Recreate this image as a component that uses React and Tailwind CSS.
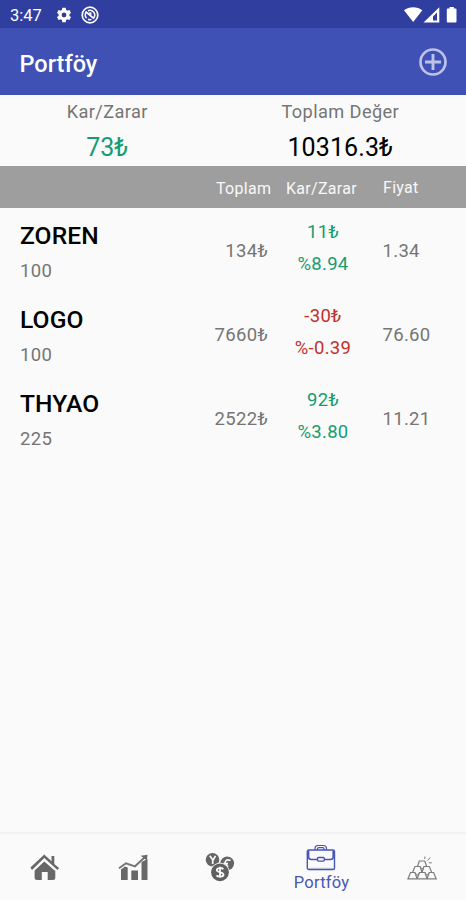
const HOLDINGS = [
  { code: 'ZOREN', lots: '100', total: '134₺', gain: '11₺', percent: '%8.94', price: '1.34', up: true },
  { code: 'LOGO', lots: '100', total: '7660₺', gain: '-30₺', percent: '%-0.39', price: '76.60', up: false },
  { code: 'THYAO', lots: '225', total: '2522₺', gain: '92₺', percent: '%3.80', price: '11.21', up: true },
];

function StatusBar() {
  return (
    <div className="flex h-[28px] items-center bg-[#303f9f] pl-[10px] pr-[8px] text-white">
      <span className="w-[45px] text-[16.5px] leading-[28px] pt-[3px]">3:47</span>
      <svg className="mt-[2px] size-[18px]" viewBox="0 0 24 24" fill="currentColor">
        <path d="M19.14 12.94c.04-.3.06-.61.06-.94s-.02-.64-.07-.94l2.03-1.58a.5.5 0 0 0 .12-.61l-1.92-3.32a.5.5 0 0 0-.59-.22l-2.39.96a7 7 0 0 0-1.62-.94l-.36-2.54a.5.5 0 0 0-.48-.41h-3.84a.5.5 0 0 0-.47.41l-.36 2.54c-.59.24-1.13.57-1.62.94l-2.39-.96a.5.5 0 0 0-.59.22L2.74 8.87a.5.5 0 0 0 .12.61l2.03 1.58a7 7 0 0 0 0 1.88l-2.03 1.58a.5.5 0 0 0-.12.61l1.92 3.32c.12.22.37.29.59.22l2.39-.96c.5.38 1.03.7 1.62.94l.36 2.54c.05.24.24.41.48.41h3.84c.24 0 .44-.17.47-.41l.36-2.54c.59-.24 1.13-.56 1.62-.94l2.39.96c.22.08.47 0 .59-.22l1.92-3.32a.5.5 0 0 0-.12-.61zM12 15.2a3.2 3.2 0 1 1 0-6.4 3.2 3.2 0 0 1 0 6.4z" />
      </svg>
      <svg className="ml-[8px] mt-[2px] size-[18px]" viewBox="0 0 18 18" fill="none" stroke="currentColor">
        <circle cx="9" cy="9" r="7.8" strokeWidth="1.7" />
        <path d="M5.600 12.200A4.700 4.700 0 0 1 5.200 6.300M7 4.800A4.700 4.700 0 0 1 12.800 11.800M7 13.200A4.700 4.700 0 0 0 10.500 13.400" strokeWidth="1.500" />
        <path d="M4.500 5.500l8.500 7.200" strokeWidth="1.700" />
        <path d="M7.800 6.700h2.400v2.200z" fill="currentColor" strokeWidth=".5" />
      </svg>
      <svg className="ml-auto mt-[1px] h-[18px] w-[54px]" viewBox="0 0 54 18" fill="currentColor">
        <path d="M0 4.300C5 .3 13.300.3 18.300 4.300L9.200 16z" />
        <path fillRule="evenodd" d="M35.300 1.200V16.400H19.500zM33 6.500L29 10.500V14.600H33z" />
        <path d="M45.500 1h4.400v1.500h1.700q.9 0 .9.900v12.100q0 .9-.9.900h-7.900q-.9 0-.9-.9V3.400q0-.9.900-.9h1.800z" />
      </svg>
    </div>
  );
}

function AppBar() {
  return (
    <header className="flex h-[67px] items-center justify-between bg-[#3f51b5] pl-[19.5px] pr-[18px]">
      <h1 className="text-[23.5px] font-medium leading-[30px] text-white pt-[5px]">Portföy</h1>
      <svg className="mt-[1px] size-[30px] text-[#bcc2e8]" viewBox="0 0 30 30" fill="none" stroke="currentColor">
        <circle cx="15" cy="15" r="12.500" strokeWidth="2.700" />
        <path d="M15 7v16M7 15h16" strokeWidth="2.900" />
      </svg>
    </header>
  );
}

function Summary() {
  return (
    <section className="flex h-[71px] text-center">
      <div className="w-[215px]">
        <div className="pt-[4px] text-[18.200px] leading-[25px] tracking-[0.4px] text-[#757575]">Kar/Zarar</div>
        <div className="mt-[9px] text-[25px] leading-[30px] text-[#169c70]">73₺</div>
      </div>
      <div className="w-[252px]">
        <div className="pt-[4px] text-[18.200px] leading-[25px] tracking-[0.4px] text-[#757575]">Toplam Değer</div>
        <div className="mt-[9px] text-[25px] leading-[30px] tracking-[0.1px] text-black">10316.3₺</div>
      </div>
    </section>
  );
}

function Row({ item }) {
  const tone = item.up ? 'text-[#169c70]' : 'text-[#c4302b]';
  return (
    <li className="flex h-[84px] pl-[20px] text-[18.5px] tracking-[0.3px] text-[#757575]">
      <div className="w-[160px]">
        <div className="pt-[12px] text-[24.600px] font-medium leading-[32px] tracking-[0.1px] text-black">{item.code}</div>
        <div className="mt-[6px] leading-[26px]">{item.lots}</div>
      </div>
      <div className="w-[88px] pt-[30px] text-right leading-[26px]">{item.total}</div>
      <div className={'w-[110px] pt-[8px] text-center leading-[32px] ' + tone}>
        <div>{item.gain}</div>
        <div>{item.percent}</div>
      </div>
      <div className="pl-[4.500px] pt-[30px] leading-[26px]">{item.price}</div>
    </li>
  );
}

function HomeIcon() {
  return (
    <svg className="h-[28px] w-[30px]" viewBox="0 0 30 28" fill="#686868">
      <path d="M.4 14.600L14.300 1.500 21.500 8.200V3h2.800v7.900l4.800 4.200-1.700 2L14.300 5 2 17z" />
      <path d="M4.600 17.400L14.300 8.400 25.300 18V24.500q0 2.500-2.500 2.500h-5.100V19h-5.900v8H7.100Q4.600 27 4.600 24.500z" />
    </svg>
  );
}

function ChartIcon() {
  return (
    <svg className="h-[28px] w-[30px]" viewBox="0 0 30 28" fill="#686868">
      <path d="M3 16.500L7 13.500 9.700 14.500V27H3zM13.300 17.500H20v9.500h-6.700zM23.500 9l6-3V27h-6z" />
      <path d="M1 15.300L8 10.300 17 13.300 26.500 4.500" fill="none" stroke="#757575" strokeWidth="1.900" />
      <path d="M22.800 2.800L29.500 1.700 28.800 7.600z" />
    </svg>
  );
}

function CurrencyIcon() {
  return (
    <svg className="h-[31px] w-[30px]" viewBox="0 0 30 31" fill="none">
      <circle cx="7.500" cy="8.700" r="6.800" fill="#656565" />
      <path d="M4.800 4.800L8 9.200 10.500 4.800M7.700 9v4" stroke="#fafafa" strokeWidth="1.700" />
      <circle cx="22.200" cy="12.300" r="6.900" fill="#656565" />
      <path d="M25.500 9.500q-4.500-2-5.500 2.300l3 4M18.500 12.500h4.500" stroke="#fafafa" strokeWidth="1.600" />
      <circle cx="15" cy="21.300" r="9.600" fill="#fafafa" />
      <circle cx="15" cy="21.300" r="8.900" fill="#606060" />
      <path d="M18.400 18.200C16.700 16.500 11.800 16.500 11.800 19.100C11.800 21.900 18.500 20.700 18.500 23.600C18.500 26.300 13.500 26.200 11.400 24.500M15 15.800v11" stroke="#fafafa" strokeWidth="1.800" />
    </svg>
  );
}

function BriefcaseIcon() {
  return (
    <svg className="h-[28px] w-[30px]" viewBox="0 0 30 28" fill="none" stroke="#4656b7" strokeWidth="1.400">
      <path d="M9 6V4.500Q9 1.500 12 1.500h5.500q3 0 3 3V6M11.500 6V4.700q0-1 1-1h4.500q1 0 1 1V6" strokeWidth="1.200" />
      <rect x="1.300" y="6" width="27.200" height="19.500" rx="1.500" />
      <path d="M2.600 7v6.300q0 2.200 3 2.200h6M27.200 7v6.300q0 2.200-3 2.200h-6" strokeWidth="1.600" />
      <rect x="11.500" y="13.500" width="6.800" height="3.600" rx="1" />
      <path d="M3 24.300h24" stroke="#a8b0dc" strokeWidth=".8" />
    </svg>
  );
}

function GoldIcon() {
  return (
    <svg className="h-[26px] w-[30px]" viewBox="0 0 30 26" fill="none" stroke="#7c7c7c" strokeWidth="1.200">
      <path d="M10.500 11.500L12.300 6h5.400l2 5.500" />
      <path d="M5.500 17.500L8 11.500h5.200l1.800 6M15 17.500l2-6h5.300l2.500 6" />
      <path d="M1 23.800L3.500 17.500h4.400l2.300 6.300zM10.200 23.800l2.300-6.300H18l2 6.300zM20 23.800l2.300-6.300h4.300l2.600 6.300z" />
      <path d="M8 17.500l2.200 3 2.300-3M18 17.500l2 3 2.300-3M13 11.500l2 3 2-3" strokeWidth=".9" />
      <path d="M17.800 4V1.500M20.500 5.500l2.700-3M21.800 7.800h3" strokeWidth="1" />
    </svg>
  );
}

function BottomNav() {
  return (
    <nav className="flex h-[68px] border-t-2 border-[#f3f3f3]">
      <div className="flex w-[89px] justify-center pt-[19px]"><HomeIcon /></div>
      <div className="flex w-[87px] justify-center pt-[19px]"><ChartIcon /></div>
      <div className="flex w-[88px] justify-center pt-[17px]"><CurrencyIcon /></div>
      <div className="flex w-[114px] flex-col items-center pt-[10px]">
        <BriefcaseIcon />
        <span className="mt-[1px] pl-px text-[16.5px] leading-[20px] tracking-[0.2px] text-[#4656b7]">Portföy</span>
      </div>
      <div className="flex w-[88px] justify-center pt-[21px]"><GoldIcon /></div>
    </nav>
  );
}

export default function App() {
  return (
    <div className="flex h-[900px] w-[466px] flex-col overflow-hidden bg-[#fafafa] font-[Roboto,sans-serif]">
      <StatusBar />
      <AppBar />
      <Summary />
      <div className="flex h-[42px] bg-[#9e9e9e] pl-[216px] text-[16px] leading-[24px] tracking-[0.3px] text-[#f8f8f8]">
        <span className="w-[70px] pt-[11px]">Toplam</span>
        <span className="w-[97px] pt-[11px]">Kar/Zarar</span>
        <span className="pt-[10px]">Fiyat</span>
      </div>
      <ul className="flex-1">
        {HOLDINGS.map((item) => <Row key={item.code} item={item} />)}
      </ul>
      <BottomNav />
    </div>
  );
}
